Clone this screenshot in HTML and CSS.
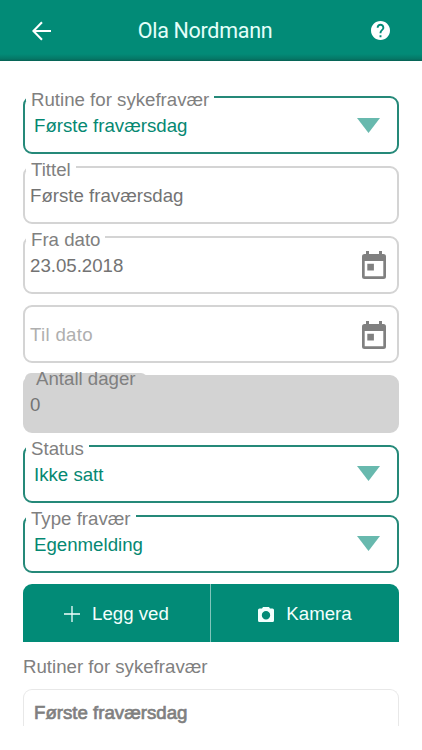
FILE: index.html
```html
<!DOCTYPE html>
<html lang="no">
<head>
<meta charset="utf-8">
<title>Ola Nordmann</title>
<link rel="stylesheet" href="styles.css">
</head>
<body>
<header class="topbar">
  <svg class="back" viewBox="0 0 20 20"><path d="M20 10H2M10.500 .8L1.500 10l9 9.200" fill="none" stroke="currentColor" stroke-width="2.200"/></svg>
  <h1 class="heading">Ola Nordmann</h1>
  <svg class="help" viewBox="2 2 20 20"><path fill="currentColor" d="M12 2C6.48 2 2 6.48 2 12s4.48 10 10 10 10-4.48 10-10S17.52 2 12 2zm1 17h-2v-2h2v2zm2.07-7.75l-.9.92C13.45 12.9 13 13.5 13 15h-2v-.5c0-1.1.45-2.1 1.17-2.83l1.24-1.26c.37-.36.59-.86.59-1.41 0-1.1-.9-2-2-2s-2 .9-2 2H8c0-2.21 1.79-4 4-4s4 1.79 4 4c0 .88-.36 1.68-.93 2.25z"/></svg>
</header>
<main class="content">
  <div class="fields">
    <div class="field select">
      <span class="label">Rutine for sykefravær</span>
      <span class="value">Første fraværsdag</span>
      <svg class="arrow" viewBox="0 0 23 15"><path fill="currentColor" d="M0 0h23L11.5 15z"/></svg>
    </div>
    <div class="field">
      <span class="label">Tittel</span>
      <span class="value">Første fraværsdag</span>
    </div>
    <div class="field">
      <span class="label">Fra dato</span>
      <span class="value">23.05.2018</span>
      <svg class="calendar" viewBox="0 0 24 28"><path fill="currentColor" fill-rule="evenodd" d="M4 0h3v3h10V0h3v3h1.500q2.500 0 2.500 2.500v20q0 2.500-2.500 2.500h-19Q0 28 0 25.500v-20Q0 3 2.500 3H4zM2.700 10v15.300h18.600V10zM5.300 12.800h6.600v6.600H5.300z"/></svg>
    </div>
    <div class="field">
      <span class="value placeholder">Til dato</span>
      <svg class="calendar" viewBox="0 0 24 28"><path fill="currentColor" fill-rule="evenodd" d="M4 0h3v3h10V0h3v3h1.500q2.500 0 2.500 2.500v20q0 2.500-2.500 2.500h-19Q0 28 0 25.500v-20Q0 3 2.500 3H4zM2.700 10v15.300h18.600V10zM5.300 12.800h6.600v6.600H5.300z"/></svg>
    </div>
    <div class="field disabled">
      <span class="label">Antall dager</span>
      <span class="value">0</span>
    </div>
    <div class="field select">
      <span class="label">Status</span>
      <span class="value">Ikke satt</span>
      <svg class="arrow" viewBox="0 0 23 15"><path fill="currentColor" d="M0 0h23L11.5 15z"/></svg>
    </div>
    <div class="field select">
      <span class="label">Type fravær</span>
      <span class="value">Egenmelding</span>
      <svg class="arrow" viewBox="0 0 23 15"><path fill="currentColor" d="M0 0h23L11.5 15z"/></svg>
    </div>
  </div>
  <div class="actions">
    <button class="action attach">
      <svg class="plus" viewBox="0 0 16 16"><path d="M8 0v16M0 8h16" stroke="currentColor" stroke-width="1.3"/></svg>
      <span>Legg ved</span>
    </button>
    <button class="action camera">
      <svg class="lens" viewBox="0 0 16 15"><path fill="currentColor" fill-rule="evenodd" d="M5 0h6l1 1.500h2.500Q16 1.500 16 3v10.500q0 1.500-1.500 1.500h-13Q0 15 0 13.500V3q0-1.500 1.500-1.500H4zM8 4a4.200 4.200 0 1 0 0 8.400A4.200 4.200 0 1 0 8 4z"/></svg>
      <span>Kamera</span>
    </button>
  </div>
  <h2 class="section">Rutiner for sykefravær</h2>
  <div class="card">Første fraværsdag</div>
</main>
</body>
</html>
```
FILE: styles.css
```css
* {
  box-sizing: border-box;
}

body {
  margin: 0;
  height: 750px;
  overflow: hidden;
  background: #fff;
  color: #737373;
  font: 18.67px/24px "Liberation Sans", Arial, sans-serif;
}

svg {
  display: block;
  flex: none;
}

.topbar {
  display: flex;
  align-items: center;
  height: 61px;
  padding: 0 32px;
  background: linear-gradient(#028b77 54px, #057766 59px, #076053 61px);
  color: #fff;
}

.back {
  width: 19px;
  height: 20px;
}

.heading {
  flex: 1;
  margin: 0;
  padding-right: 12px;
  text-align: center;
  font: 400 21.5px/24px Roboto, sans-serif;
  letter-spacing: -0.3px;
  color: #e4fffa;
}

.help {
  width: 19px;
  height: 19px;
}

.content {
  padding: 35px 23px 0;
}

.fields {
  display: flex;
  flex-direction: column;
  gap: 11.8px;
}

.field {
  position: relative;
  display: flex;
  align-items: center;
  justify-content: space-between;
  height: 58px;
  padding: 2px 12px 0 6px;
  border: 2px solid #d4d4d4;
  padding: 2px 11px 0 5px;
  border-radius: 9px;
}

.label {
  position: absolute;
  top: -10px;
  left: 1px;
  height: 13px;
  padding: 0 5px;
  background: #fff;
  color: #808080;
  line-height: 24px;
  white-space: nowrap;
}

.select {
  padding: 2px 17px 0 9px;
  border-color: #258979;
  color: #058872;
}

.placeholder {
  color: #afafaf;
  letter-spacing: 0.3px;
}

.arrow {
  width: 23px;
  height: 15px;
  margin-bottom: 2px;
  color: #68b9ae;
}

.calendar {
  width: 24px;
  height: 28px;
  margin-bottom: 1px;
  color: #808080;
}

.disabled {
  border-color: #d3d3d3;
  background: #d3d3d3;
}

.disabled .label {
  top: -4px;
  left: 0;
  height: 10px;
  padding: 0 11px;
  border-radius: 6px 6px 0 0;
  background: #d3d3d3;
  line-height: 12px;
}

.actions {
  display: grid;
  grid-template-columns: 1fr 1fr;
  height: 58px;
  margin-top: 11.7px;
  overflow: hidden;
  border-radius: 9px 9px 0 0;
}

.action {
  display: flex;
  align-items: center;
  justify-content: center;
  gap: 12px;
  padding: 2px 0 0;
  border: 0;
  background: #028b77;
  color: #f2fffd;
  font: inherit;
}

.attach {
  border-right: 1px solid #81c5bb;
}

.plus {
  width: 16px;
  height: 16px;
}

.lens {
  width: 16px;
  height: 15px;
}

.section {
  margin: 12px 0 10px;
  font-size: 18.67px;
  font-weight: 400;
  line-height: 25px;
  color: #808080;
}

.card {
  height: 37px;
  padding: 11px 10px 0;
  border: 1px solid #e8e8e8;
  border-bottom: 0;
  border-radius: 9px 9px 0 0;
  color: #808080;
  -webkit-text-stroke: 0.7px #808080;
}
```
